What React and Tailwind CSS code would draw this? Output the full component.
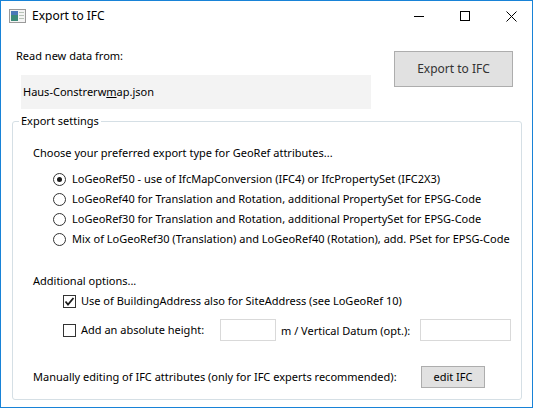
import React from 'react';

const font = { fontFamily: '"Segoe UI", "Noto Sans", sans-serif' };

const Radio = ({ checked, label }) => (
  <div className="flex items-center h-[20px]">
    <span className="w-[13px] h-[13px] shrink-0 rounded-full border border-[#333] bg-white flex items-center justify-center">
      {checked && <span className="w-[5px] h-[5px] rounded-full bg-[#1a1a1a]" />}
    </span>
    <span className="ml-[6px] whitespace-nowrap">{label}</span>
  </div>
);

const Check = ({ checked }) => (
  <span className="w-[13px] h-[13px] border border-[#333] bg-white flex items-center justify-center shrink-0">
    {checked && (
      <svg width="11" height="11" viewBox="0 0 11 11">
        <path d="M1.5 5.5 L4 8.5 L9.5 2" stroke="#1a1a1a" strokeWidth="1.8" fill="none" />
      </svg>
    )}
  </span>
);

export default function App() {
  return (
    <div className="w-[535px] h-[409px] bg-white text-[11px] text-black" style={font}>
      <div className="w-[533px] h-[408px] border border-[#1883d7] flex flex-col">
        {/* Title bar */}
        <div className="h-[30px] flex items-center shrink-0 text-[12px]">
          <svg className="ml-[8px]" width="17" height="14" viewBox="0 0 17 14">
            <rect x="0.5" y="0.5" width="16" height="13" fill="#f4f4f4" stroke="#9a9a9a" />
            <rect x="2" y="2" width="7" height="10" fill="#3c8a78" />
            <rect x="2" y="2" width="7" height="4" fill="#4a78b8" />
            <rect x="10" y="3" width="5" height="1" fill="#b8c4b8" />
            <rect x="10" y="6" width="5" height="1" fill="#b8c4b8" />
            <rect x="10" y="9" width="5" height="1" fill="#b8c4b8" />
          </svg>
          <span className="ml-[6px]">Export to IFC</span>
          <div className="ml-auto mr-[-2px] flex h-full">
            <div className="w-[46px] flex items-center justify-center">
              <span className="w-[10px] h-px bg-black" />
            </div>
            <div className="w-[46px] flex items-center justify-center">
              <span className="w-[10px] h-[10px] border border-black" />
            </div>
            <div className="w-[46px] flex items-center justify-center">
              <svg width="11" height="11" viewBox="0 0 11 11">
                <path d="M0.5 0.5 L10.5 10.5 M10.5 0.5 L0.5 10.5" stroke="#000" strokeWidth="1" />
              </svg>
            </div>
          </div>
        </div>

        {/* Source */}
        <div className="flex pl-[15px] pt-[17px]">
          <div className="w-[356px]">
            <div className="leading-[16px]">Read new data from:</div>
            <div className="ml-[5px] mt-[11px] w-[350px] h-[34px] bg-[#f3f3f3] flex items-center pl-[2px]">
              Haus-Constrerw<span className="underline">m</span>ap.json
            </div>
          </div>
          <button className="ml-[22px] mt-[3px] w-[119px] h-[36px] bg-[#e1e1e1] border border-[#adadad] text-[#333] text-[12px]">
            Export to IFC
          </button>
        </div>

        {/* Export settings group */}
        <div className="relative ml-[11px] mt-[12px] w-[510px] h-[279px] border border-[#d5dfe5] rounded-[3px] pl-[20px]">
          <span className="absolute left-[6px] top-[-9px] bg-white px-[2px] leading-[16px]">Export settings</span>
          <div className="mt-[23px] leading-[16px]">Choose your preferred export type for GeoRef attributes...</div>
          <div className="ml-[20px] mt-[8px] flex flex-col">
            <Radio checked label="LoGeoRef50 - use of IfcMapConversion (IFC4) or IfcPropertySet (IFC2X3)" />
            <Radio label="LoGeoRef40 for Translation and Rotation, additional PropertySet for EPSG-Code" />
            <Radio label="LoGeoRef30 for Translation and Rotation, additional PropertySet for EPSG-Code" />
            <Radio label="Mix of LoGeoRef30 (Translation) and LoGeoRef40 (Rotation), add. PSet for EPSG-Code" />
          </div>
          <div className="mt-[24px] leading-[16px]">Additional options...</div>
          <div className="ml-[30px] mt-[4px] flex items-center h-[16px]">
            <Check checked />
            <span className="ml-[5px] whitespace-nowrap">Use of BuildingAddress also for SiteAddress (see LoGeoRef 10)</span>
          </div>
          <div className="ml-[30px] mt-[9px] flex items-center h-[24px]">
            <Check />
            <span className="ml-[5px] w-[139px] whitespace-nowrap">Add an absolute height:</span>
            <span className="w-[56px] h-[22px] border border-[#d9d9d9] bg-white shrink-0" />
            <span className="ml-[5px] w-[139px] whitespace-nowrap mt-[2px]">m / Vertical Datum (opt.):</span>
            <span className="w-[91px] h-[22px] border border-[#d9d9d9] bg-white shrink-0" />
          </div>
          <div className="mt-[24px] flex items-center h-[22px]">
            <span className="whitespace-nowrap">Manually editing of IFC attributes (only for IFC experts recommended):</span>
            <button className="ml-auto mr-[36px] w-[64px] h-[22px] bg-[#e1e1e1] border border-[#adadad] shrink-0">edit IFC</button>
          </div>
        </div>
      </div>
    </div>
  );
}
